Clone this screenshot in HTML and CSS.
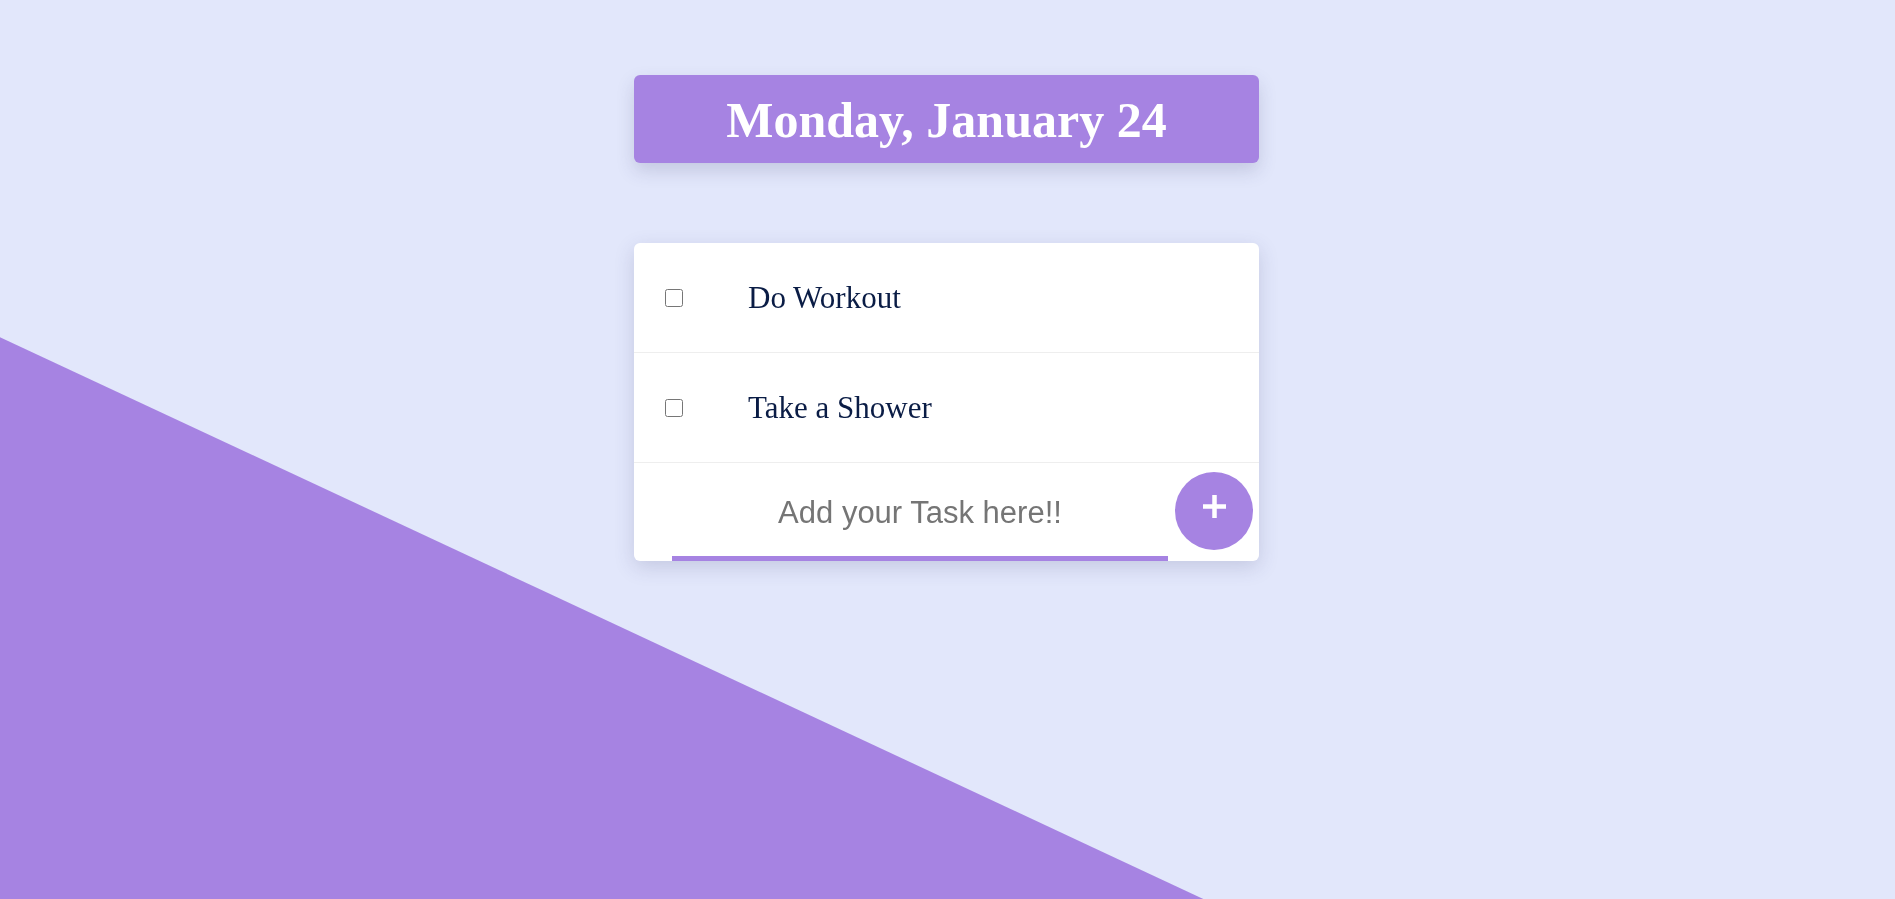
FILE: index.html
```html
<!DOCTYPE html>
<html lang="en">
<head>
<meta charset="utf-8">
<title>Todo</title>
<link rel="stylesheet" href="styles.css">
</head>
<body>
<div class="backdrop"></div>
<main class="app">
  <header class="date-box">
    <h1 class="date">Monday, January 24</h1>
  </header>
  <section class="card">
    <div class="task">
      <input type="checkbox" class="check">
      <span class="task-text">Do Workout</span>
    </div>
    <div class="task">
      <input type="checkbox" class="check">
      <span class="task-text">Take a Shower</span>
    </div>
    <form class="add-row" onsubmit="return false">
      <input type="text" class="add-input" placeholder="Add your Task here!!">
      <button type="button" class="add-btn" aria-label="Add task">
        <svg width="23" height="23" viewBox="0 0 23 23"><path d="M11.5 0v23M0 11.5h23" stroke="#fff" stroke-width="4.5" fill="none"/></svg>
      </button>
    </form>
  </section>
</main>
</body>
</html>
```

FILE: styles.css
```css
html, body {
  margin: 0;
  padding: 0;
}
body {
  background: #e2e7fb;
  min-height: 899px;
  overflow: hidden;
  font-family: "Liberation Serif", "Times New Roman", serif;
}
.backdrop {
  position: fixed;
  inset: 0;
  background: #a683e2;
  clip-path: polygon(0 37.5%, 63.5% 100%, 0 100%);
  z-index: 0;
}
.app {
  position: relative;
  z-index: 1;
  display: flex;
  flex-direction: column;
  align-items: center;
  padding: 75px 2px 0 0;
  gap: 80px;
}
.date-box {
  width: 625px;
  height: 88px;
  background: #a683e2;
  border-radius: 6px;
  display: flex;
  align-items: center;
  justify-content: center;
  box-shadow: 0 8px 18px rgba(60, 60, 110, 0.18);
}
.date {
  margin: 0;
  color: #fff;
  font-size: 50px;
  font-weight: bold;
  line-height: 1.1;
  padding-top: 2px;
}
.card {
  width: 625px;
  background: #fff;
  border-radius: 6px;
  box-shadow: 0 6px 20px rgba(60, 60, 110, 0.18);
  overflow: hidden;
}
.task {
  height: 109px;
  display: flex;
  align-items: center;
  padding-left: 31px;
  border-bottom: 1px solid #eeeeee;
  box-sizing: content-box;
}
.check {
  width: 18px;
  height: 18px;
  margin: 0 65px 0 0;
  accent-color: #a683e2;
}
.task-text {
  font-size: 31px;
  color: #0a1c45;
}
.add-row {
  height: 98px;
  display: flex;
  align-items: stretch;
  padding: 0 6px 0 38px;
  gap: 7px;
  margin: 0;
}
.add-input {
  width: 496px;
  box-sizing: border-box;
  border: none;
  border-bottom: 5px solid #a683e2;
  outline: none;
  padding: 6px 0 0;
  margin: 0;
  text-align: center;
  font-family: "Liberation Sans", Arial, sans-serif;
  font-size: 31px;
  color: #333;
  background: transparent;
}
.add-input::placeholder {
  color: #757575;
}
.add-btn {
  align-self: flex-start;
  margin-top: 9px;
  width: 78px;
  height: 78px;
  border-radius: 50%;
  border: none;
  background: #a683e2;
  padding: 0 0 10px;
  display: flex;
  align-items: center;
  justify-content: center;
  cursor: pointer;
}
```
